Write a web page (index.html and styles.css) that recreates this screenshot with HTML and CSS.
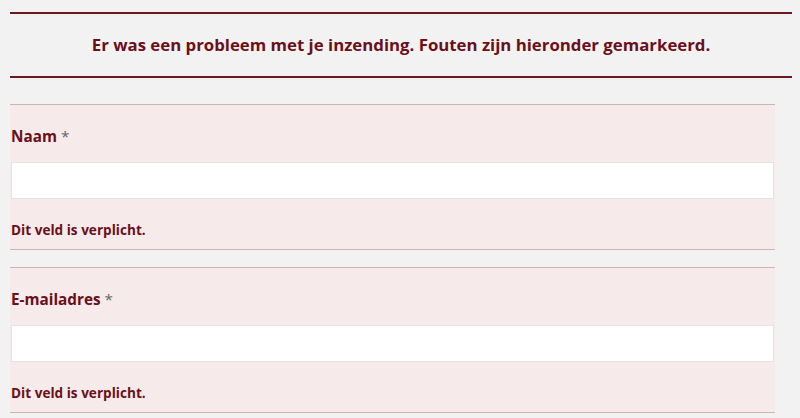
FILE: index.html
```html
<!DOCTYPE html>
<html>
<head>
    <title>Contactformulier</title>
    <link rel="stylesheet" href="styles.css">
</head>
<body>
    <div class="form-wrapper">
        <div class="validation-error">
            <h2>Er was een probleem met je inzending. Fouten zijn hieronder gemarkeerd.</h2>
        </div>
        <form id="contactForm" class="form-fields">
            <div class="field field-error">
                <label for="naam">Naam <span class="required">*</span></label>
                <input type="text" id="naam" name="naam">
                <div class="validation-message">Dit veld is verplicht.</div>
            </div>
            <div class="field field-error">
                <label for="email">E-mailadres <span class="required">*</span></label>
                <input type="email" id="email" name="email">
                <div class="validation-message">Dit veld is verplicht.</div>
            </div>
        </form>
    </div>
</body>
</html>
```

FILE: styles.css
```css
body {
    margin: 0;
    font-family: "Open Sans", Arial, sans-serif;
    background-color: #f2f2f2;
}
.form-wrapper {
    padding: 12px 8px 0 10px;
}
.validation-error {
    border-top: 2px solid #6b1a21;
    border-bottom: 2px solid #6b1a21;
    padding: 20px 0;
    text-align: center;
}
.validation-error h2 {
    margin: 0;
    font-size: 16.8px;
    line-height: 22px;
    font-weight: 700;
    color: #6b0f19;
}
.form-fields {
    margin-top: 26px;
    width: 765px;
}
.field {
    margin-bottom: 17px;
}
.field-error {
    background-color: #f6ebea;
    border-top: 1px solid #cdb3b3;
    border-bottom: 1px solid #cdb3b3;
    padding: 20px 1px 9px 1px;
}
label {
    display: block;
    font-size: 15.3px;
    line-height: 22px;
    font-weight: 700;
    color: #6b0f19;
    margin-bottom: 15px;
}
.required {
    color: #666;
    font-weight: 400;
}
input[type="text"], input[type="email"] {
    display: block;
    box-sizing: border-box;
    width: 100%;
    height: 37px;
    margin: 0;
    padding: 6px 8px;
    border: 1px solid #e3e3e3;
    background-color: #fff;
    font-family: inherit;
    font-size: 15px;
}
.validation-message {
    margin-top: 21px;
    font-size: 13.6px;
    line-height: 20px;
    font-weight: 700;
    color: #6b0f19;
}
```
